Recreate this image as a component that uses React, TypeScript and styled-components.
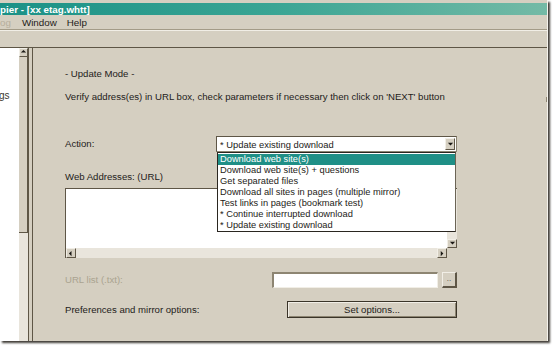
import React from "react";
import styled, { createGlobalStyle } from "styled-components";

const BEIGE = "#d5cfc1";
const DARK = "#5e5646";
const SHADE = "#8d8572";
const LIGHT = "#f1eee6";
const TEAL = "#1f8f86";
const FONT = `"Liberation Sans", Arial, sans-serif`;

const ACTIONS = [
  "Download web site(s)",
  "Download web site(s) + questions",
  "Get separated files",
  "Download all sites in pages (multiple mirror)",
  "Test links in pages (bookmark test)",
  "* Continue interrupted download",
  "* Update existing download",
];

const GlobalStyle = createGlobalStyle`
  html, body {
    margin: 0;
    padding: 0;
    background: #ffffff;
  }
  body {
    font-family: ${FONT};
    color: #222018;
  }
`;

const Arrow = ({ dir }: { dir: "up" | "down" | "left" | "right" }) => {
  const pts = {
    up: "1,4 4,1 7,4",
    down: "1,2 4,5 7,2",
    left: "4,1 1,4 4,7",
    right: "2,1 5,4 2,7",
  }[dir];
  return (
    <svg width="7" height="7" viewBox="0 0 8 8">
      <polygon points={pts} fill="#1a1814" />
    </svg>
  );
};

const App: React.FC = () => {
  return (
    <Screen>
      <GlobalStyle />
      <Window>
        <TitleBar>
          <TitleText>pier - [xx etag.whtt]</TitleText>
        </TitleBar>
        <MenuBar>
          <MenuItem disabled>og</MenuItem>
          <MenuItem>Window</MenuItem>
          <MenuItem>Help</MenuItem>
        </MenuBar>
        <ToolBar />
        <Body>
          <TreePane>
            <TreeList>
              <TreeLabel>gs</TreeLabel>
            </TreeList>
            <TreeScroll>
              <ScrollButton>
                <Arrow dir="up" />
              </ScrollButton>
              <TreeThumb />
              <ScrollTrack />
            </TreeScroll>
          </TreePane>
          <MainPanel>
            <Form>
              <Text>- Update Mode -</Text>
              <Text $top={11}>
                Verify address(es) in URL box, check parameters if necessary
                then click on 'NEXT' button
              </Text>

              <Row $top={33}>
                <Text>Action:</Text>
                <Combo>
                  <ComboValue>* Update existing download</ComboValue>
                  <ComboButton>
                    <Arrow dir="down" />
                  </ComboButton>
                  <DropList>
                    {ACTIONS.map((action, idx) => (
                      <DropItem key={`action-${idx}`} selected={idx === 0}>
                        {action}
                      </DropItem>
                    ))}
                  </DropList>
                </Combo>
              </Row>

              <Text $top={19}>Web Addresses: (URL)</Text>
              <UrlBox>
                <UrlArea>
                  <UrlWhite />
                  <VTrack>
                    <ScrollButton>
                      <Arrow dir="down" />
                    </ScrollButton>
                  </VTrack>
                </UrlArea>
                <HTrack>
                  <ScrollButton>
                    <Arrow dir="left" />
                  </ScrollButton>
                  <HFill />
                  <ScrollButton>
                    <Arrow dir="right" />
                  </ScrollButton>
                  <Corner />
                </HTrack>
              </UrlBox>

              <Row $top={14}>
                <Text disabled>URL list (.txt):</Text>
                <FileGroup>
                  <FileInput />
                  <SmallButton>..</SmallButton>
                </FileGroup>
              </Row>

              <Row $top={13}>
                <Text>Preferences and mirror options:</Text>
                <OptionsButton>Set options...</OptionsButton>
              </Row>
            </Form>
          </MainPanel>
        </Body>
        <EdgeTick />
      </Window>
    </Screen>
  );
};

const Screen = styled.div`
  width: 554px;
  height: 347px;
  overflow: hidden;
  background: #ffffff;
`;
const Window = styled.div`
  position: relative;
  width: 548px;
  height: 341px;
  background: ${BEIGE};
  display: flex;
  flex-direction: column;
  padding-top: 3px;
  box-sizing: border-box;
  box-shadow: 2px 2px 2px rgba(30, 26, 20, 0.85);
  border-right: 1px solid #f4f2ec;
`;
const TitleBar = styled.div`
  height: 12px;
  display: flex;
  align-items: center;
  background: linear-gradient(90deg, #1b9186 0%, #3aa594 50%, #74baa6 100%);
`;
const TitleText = styled.div`
  color: #ffffff;
  font-size: 9.8px;
  font-weight: bold;
  white-space: nowrap;
`;
const MenuBar = styled.div`
  height: 14px;
  display: flex;
  align-items: center;
  gap: 10px;
  font-size: 9.8px;
  border-bottom: 1px solid #a39b87;
`;
const MenuItem = styled.span<{ disabled?: boolean }>`
  color: ${({ disabled }) => (disabled ? "#b5ae9c" : "#24211a")};
  &:first-child {
    margin-right: 1px;
  }
`;
const ToolBar = styled.div`
  height: 16px;
  border-top: 1px solid ${LIGHT};
  border-bottom: 1px solid ${DARK};
`;
const Body = styled.div`
  flex: 1;
  display: flex;
  gap: 3px;
`;
const TreePane = styled.div`
  width: 28px;
  display: flex;
  border-right: 1px solid ${DARK};
`;
const TreeList = styled.div`
  width: 19px;
  background: #ffffff;
  overflow: hidden;
`;
const TreeLabel = styled.div`
  margin-top: 42px;
  margin-left: -1px;
  font-size: 10px;
  color: #3a372e;
`;
const TreeScroll = styled.div`
  width: 9px;
  display: flex;
  flex-direction: column;
`;
const ScrollButton = styled.div`
  width: 9px;
  height: 9px;
  flex: none;
  display: flex;
  align-items: center;
  justify-content: center;
  background: ${BEIGE};
  box-sizing: border-box;
  border-top: 1px solid ${LIGHT};
  border-left: 1px solid ${LIGHT};
  border-right: 1px solid ${DARK};
  border-bottom: 1px solid ${DARK};
`;
const TreeThumb = styled.div`
  height: 175px;
  background: ${BEIGE};
  border-bottom: 1px solid ${DARK};
  border-right: 1px solid ${DARK};
`;
const ScrollTrack = styled.div`
  flex: 1;
  background: #e9e5dc;
`;
const MainPanel = styled.div`
  flex: 1;
  border-left: 1px solid ${DARK};
  padding: 20px 0 0 32px;
`;
const Form = styled.div`
  width: 392px;
  display: flex;
  flex-direction: column;
`;
const Text = styled.div<{ $top?: number; disabled?: boolean }>`
  font-size: 9.6px;
  line-height: 12px;
  white-space: nowrap;
  margin-top: ${({ $top = 0 }) => $top}px;
  color: ${({ disabled }) => (disabled ? "#aaa390" : "#24211a")};
`;
const Row = styled.div<{ $top?: number }>`
  display: flex;
  align-items: center;
  justify-content: space-between;
  margin-top: ${({ $top = 0 }) => $top}px;
`;
const Combo = styled.div`
  position: relative;
  width: 241px;
  height: 16px;
  box-sizing: border-box;
  background: #ffffff;
  border: 1px solid ${SHADE};
  border-top-color: ${DARK};
  border-left-color: ${DARK};
  display: flex;
  align-items: center;
  padding: 1px;
`;
const ComboValue = styled.div`
  flex: 1;
  padding-left: 2px;
  font-size: 9.4px;
  white-space: nowrap;
`;
const ComboButton = styled(ScrollButton)`
  width: 10px;
  height: 12px;
`;
const DropList = styled.div`
  position: absolute;
  top: 15px;
  left: 0;
  right: 0;
  height: 80px;
  box-sizing: border-box;
  background: #ffffff;
  border: 1px solid #2a2620;
  border-right-color: #6b6455;
  padding-top: 1px;
  z-index: 2;
`;
const DropItem = styled.div<{ selected?: boolean }>`
  height: 11px;
  line-height: 11px;
  padding-left: 2px;
  font-size: 9.3px;
  white-space: nowrap;
  color: ${({ selected }) => (selected ? "#ffffff" : "#1e1c17")};
  background: ${({ selected }) => (selected ? TEAL : "transparent")};
`;
const UrlBox = styled.div`
  margin-top: 5px;
  height: 70px;
  box-sizing: border-box;
  border-top: 1px solid ${DARK};
  border-left: 1px solid ${DARK};
  display: flex;
  flex-direction: column;
`;
const UrlArea = styled.div`
  flex: 1;
  display: flex;
`;
const UrlWhite = styled.div`
  flex: 1;
  background: #ffffff;
`;
const VTrack = styled.div`
  width: 10px;
  background: #e9e5dc;
  display: flex;
  flex-direction: column;
  justify-content: flex-end;
  ${ScrollButton} {
    width: 10px;
  }
`;
const HTrack = styled.div`
  height: 10px;
  display: flex;
  background: #e9e5dc;
  ${ScrollButton} {
    height: 10px;
    width: 10px;
  }
`;
const HFill = styled.div`
  flex: 1;
`;
const Corner = styled.div`
  width: 10px;
  background: ${BEIGE};
`;
const FileGroup = styled.div`
  display: flex;
  gap: 4px;
`;
const FileInput = styled.div`
  width: 166px;
  height: 16px;
  box-sizing: border-box;
  background: #ffffff;
  border: 1px solid ${LIGHT};
  border-top: 2px solid ${SHADE};
  border-left: 2px solid ${SHADE};
`;
const SmallButton = styled.div`
  width: 15px;
  height: 16px;
  box-sizing: border-box;
  display: flex;
  align-items: flex-end;
  justify-content: center;
  padding-bottom: 3px;
  font-size: 8px;
  line-height: 8px;
  color: #4a463c;
  border-top: 1px solid ${LIGHT};
  border-left: 1px solid ${LIGHT};
  border-right: 2px solid ${DARK};
  border-bottom: 2px solid ${DARK};
`;
const OptionsButton = styled.div`
  width: 170px;
  height: 17px;
  box-sizing: border-box;
  display: flex;
  align-items: center;
  justify-content: center;
  font-size: 9.6px;
  color: #24211a;
  border: 1px solid #3a3428;
  box-shadow: inset 1px 1px 0 ${LIGHT}, inset -1px -1px 0 ${SHADE};
`;
const EdgeTick = styled.div`
  position: absolute;
  right: 0;
  top: 97px;
  width: 1px;
  height: 5px;
  background: ${SHADE};
`;

export default App;
